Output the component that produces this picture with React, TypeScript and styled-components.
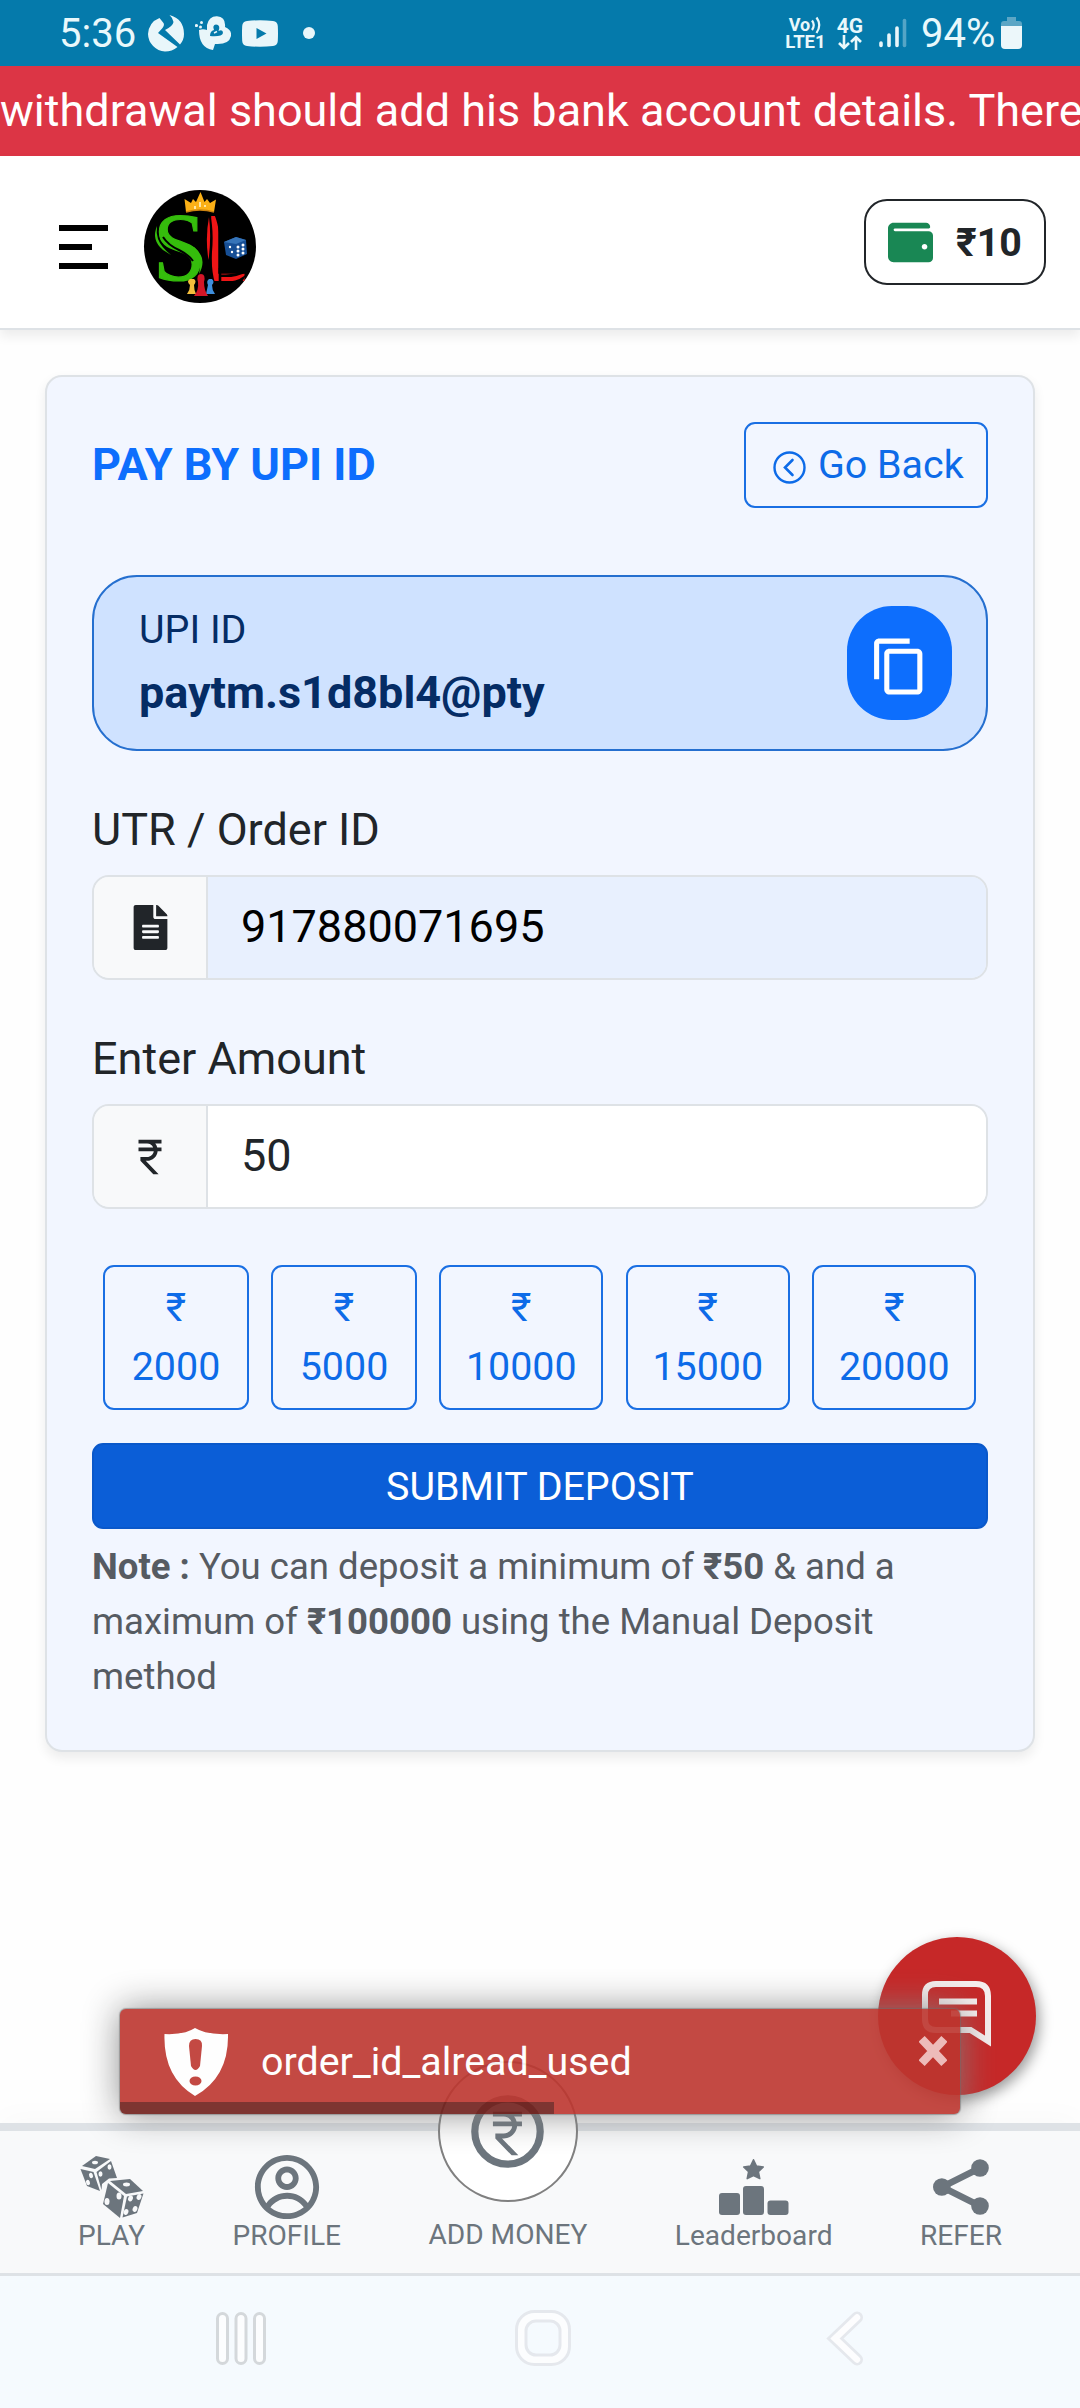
import React from "react";
import styled, { createGlobalStyle } from "styled-components";
import { FaFileAlt, FaWallet } from "react-icons/fa";
import { MdContentCopy, MdCurrencyRupee } from "react-icons/md";
import { CgProfile } from "react-icons/cg";

const GlobalStyle = createGlobalStyle`
  *, *::before, *::after { box-sizing: border-box; }
  body { margin: 0; background: #fff; color: #212529; font-family: Roboto, "Noto Sans", sans-serif; font-size: 45px; line-height: 1.5; }
  button { font-family: inherit; margin: 0; cursor: pointer; }
  svg { display: block; flex: none; }
`;

const Screen = styled.div`
  position: relative;
  display: flex;
  flex-direction: column;
  width: 1080px;
  height: 2408px;
  overflow: hidden;
  background: #fefefe;
`;

/* ---------- status bar ---------- */

const StatusBar = styled.div`
  display: flex;
  align-items: center;
  justify-content: space-between;
  flex: none;
  height: 66px;
  padding: 0 58px 0 59px;
  background: #057aab;
  color: #e9f8fb;
`;

const StatusGroup = styled.div`
  display: flex;
  align-items: center;
  height: 66px;
`;

const StatusText = styled.span<{ $width: number }>`
  width: ${(p) => p.$width}px;
  font-size: 40px;
  line-height: 65px;
  white-space: nowrap;
`;

const Stack = styled.div<{ $gap: number }>`
  display: flex;
  flex-direction: column;
  align-items: center;
  margin-right: ${(p) => p.$gap}px;
`;

const TinyText = styled.span<{ $size: number; $line: number }>`
  display: flex;
  font-size: ${(p) => p.$size}px;
  line-height: ${(p) => p.$line}px;
  font-weight: 700;
  white-space: nowrap;
`;

/* ---------- top of the page ---------- */

const Marquee = styled.div`
  flex: none;
  height: 90px;
  padding-top: 11px;
  overflow: hidden;
  background: #dc3545;
  color: #fff;
  line-height: 67.5px;
  white-space: nowrap;
`;

const Header = styled.header`
  display: flex;
  align-items: center;
  flex: none;
  height: 174px;
  padding: 9px 34px 0 59px;
  background: #fff;
  border-bottom: 2px solid #dee2e6;
  box-shadow: 0 5.6px 11.25px rgba(0, 0, 0, 0.075);
`;

const MenuButton = styled.button`
  display: flex;
  flex-direction: column;
  gap: 13px;
  width: 49px;
  margin-right: 36px;
  padding: 0;
  border: 0;
  background: none;
`;

const MenuLine = styled.span<{ $width: number }>`
  width: ${(p) => p.$width}px;
  height: 6px;
  background: #000;
`;

const WalletButton = styled.button`
  display: flex;
  align-items: center;
  width: 182px;
  height: 86px;
  margin: -9px 0 0 auto;
  padding: 0 0 0 22px;
  border: 2px solid #212529;
  border-radius: 23px;
  background: #fff;
  color: #212529;
  font-size: 39.4px;
  font-weight: 700;
  line-height: 57px;

  svg { margin-right: 23px; color: #198754; }
`;

/* ---------- deposit card ---------- */

const Main = styled.main`
  flex: 1;
  padding: 45px;
`;

const Card = styled.section`
  padding: 45px;
  border: 2px solid #dee2e6;
  border-radius: 17px;
  background: #f2f6ff;
  box-shadow: 0 5.6px 11.25px rgba(0, 0, 0, 0.075);
`;

const CardHead = styled.div`
  display: flex;
  align-items: center;
  justify-content: space-between;
  margin-bottom: 67px;
`;

const CardTitle = styled.h1`
  margin: 0;
  color: #0d6efd;
  font-size: 45px;
  font-weight: 700;
  line-height: 67.5px;
`;

const OutlineButton = styled.button`
  border: 2px solid #1a6fe3;
  border-radius: 11px;
  background: transparent;
  color: #0d6be8;
  font-size: 39.4px;
  line-height: 59px;
`;

const BackButton = styled(OutlineButton)`
  display: flex;
  align-items: center;
  width: 244px;
  height: 86px;
  padding: 0 0 1px 27px;

  svg { margin: 6px 12px 0 0; }
`;

const UpiBox = styled.div`
  display: flex;
  align-items: center;
  justify-content: space-between;
  height: 176px;
  padding: 0 34px 0 45px;
  border: 2px solid #256fcf;
  border-radius: 45px;
  background: #cfe2ff;
  color: #052c65;
`;

const UpiLabel = styled.div`
  font-size: 39.4px;
  line-height: 59px;
`;

const UpiValue = styled.div`
  font-size: 45px;
  font-weight: 700;
  line-height: 67.5px;
`;

const CopyButton = styled.button`
  display: flex;
  align-items: center;
  justify-content: center;
  width: 105px;
  height: 114px;
  padding: 6px 0 0;
  border: 0;
  border-radius: 45px;
  background: #0d6efd;
  color: #fff;
`;

const Label = styled.label`
  display: block;
  margin: 45px 0 11.5px;
  line-height: 67.5px;
`;

const InputGroup = styled.div`
  display: flex;
  height: 105px;
  overflow: hidden;
  border: 2px solid #dee2e6;
  border-radius: 17px;
`;

const Addon = styled.span`
  display: flex;
  align-items: center;
  justify-content: center;
  width: 114px;
  border-right: 2px solid #dee2e6;
  background: #f8f9fa;
`;

const Field = styled.input<{ $filled?: boolean }>`
  flex: 1;
  min-width: 0;
  padding: 0 33px 2px;
  border: 0;
  outline: 0;
  background: ${(p) => (p.$filled ? "#e8f0fe" : "#fff")};
  color: ${(p) => (p.$filled ? "#000" : "#212529")};
  font: 45px Roboto, sans-serif;
`;

const Amounts = styled.div`
  display: flex;
  gap: 22.5px;
  margin: 56px 0 33px;
  padding: 0 11.25px;
`;

const AmountButton = styled(OutlineButton)<{ $width: number }>`
  display: flex;
  flex-direction: column;
  align-items: center;
  justify-content: center;
  width: ${(p) => p.$width}px;
  height: 145px;
  padding: 0 0 1px;
`;

const SubmitButton = styled.button`
  display: block;
  width: 100%;
  height: 86px;
  padding: 1px 0 0;
  border: 2px solid #0a58ca;
  border-radius: 11px;
  background: #0b5ed7;
  color: #fff;
  font-size: 39.4px;
  line-height: 59px;
`;

const Note = styled.p`
  margin: 11px 0 0;
  color: #565b62;
  font-size: 36.56px;
  line-height: 54.84px;

  b { font-weight: 700; }
`;

/* ---------- overlays ---------- */

const ChatButton = styled.button`
  position: absolute;
  left: 878px;
  top: 1937px;
  display: flex;
  width: 158px;
  height: 158px;
  padding: 44px;
  border: 0;
  border-radius: 50%;
  background: #c62828;
  box-shadow: 3px 5px 14px rgba(0, 0, 0, 0.4);
`;

const Toast = styled.div`
  position: absolute;
  left: 120px;
  top: 2009px;
  display: flex;
  width: 840px;
  height: 105px;
  padding: 19px 13px 0 44px;
  border-radius: 6px;
  background: #bd362f;
  box-shadow: 0 0 1px 1px rgba(110, 110, 110, 0.6), 0 0 36px #828282;
  color: #fff;
  font-size: 39.4px;
  line-height: 59px;
  opacity: 0.9;
`;

const ToastText = styled.span`
  flex: 1;
  padding: 4px 0 0 32px;
`;

const ToastClose = styled.button`
  align-self: flex-start;
  margin-top: 8px;
  padding: 0;
  border: 0;
  background: none;
`;

const ToastProgress = styled.div`
  position: absolute;
  left: 0;
  bottom: 0;
  width: 434px;
  height: 12px;
  border-bottom-left-radius: 6px;
  background: #000;
  opacity: 0.4;
`;

/* ---------- bottom bars ---------- */

const BottomNav = styled.nav`
  display: flex;
  justify-content: space-between;
  flex: none;
  height: 153px;
  padding: 0 78px 0 78px;
  border-top: 8px solid #dee2e6;
  border-bottom: 3px solid #dee2e6;
  background: #f8f9fa;
  box-shadow: 0 -5px 30px rgba(0, 0, 0, 0.025);
`;

const NavItem = styled.a<{ $lift?: boolean }>`
  position: relative;
  display: flex;
  flex-direction: column;
  align-items: center;
  justify-content: flex-end;
  padding-bottom: ${(p) => (p.$lift ? 18 : 17)}px;
  color: #6c757d;
  font-size: 28.1px;
  line-height: 41px;
  white-space: nowrap;
`;

const IconSlot = styled.span`
  display: flex;
  align-items: center;
  justify-content: center;
  height: 70px;
  margin-bottom: -7px;
`;

const CoinBadge = styled.span`
  position: absolute;
  left: 50%;
  top: -70px;
  display: flex;
  align-items: center;
  justify-content: center;
  width: 140px;
  height: 141px;
  margin-left: -70px;
  border: 2px solid #808080;
  border-radius: 50%;
  background: #fff;
`;

const SystemNav = styled.div`
  display: grid;
  grid-template-columns: 300px 310px auto;
  align-items: start;
  flex: none;
  height: 132px;
  padding: 33px 0 0 214px;
  background: #f5fafe;
`;

/* ---------- drawings ---------- */

const StatusIcon = styled.svg<{ $gap: number }>`
  margin-right: ${(p) => p.$gap}px;
`;

const CallGlyph = () => (
  <StatusIcon $gap={11} width="36" height="37" viewBox="0 0 36 37">
    <path fill="#e9f6fa" d="M11.500 3L15.500 8Q16.800 10 14.500 13L10 18L29.500 32Q24 36.500 17 36.500A18 18 0 0 1 0 19Q1 7 11.500 3ZM21.500 0Q36 4 36 19Q36 25 32 29.500L17 15Q25 11 25.500 7Q24.500 2.500 21.500 0Z" />
  </StatusIcon>
);

const HeartGlyph = () => (
  <StatusIcon $gap={11} width="36" height="34" viewBox="0 0 36 34">
    <g fill="#e9f6fa">
      <circle cx="1.500" cy="9.500" r="1.600" />
      <circle cx="6.500" cy="6.500" r="1.500" />
      <circle cx="5.500" cy="11" r="1.500" />
      <path d="M12 9Q14 0 22 .3Q31 1 30 11Q37 14 36 20Q34 29 20 28L18 34Q4 32 4 14Q8 12.500 12 14Z" />
    </g>
    <path fill="#057aab" d="M15 20Q15 15 19 14Q17 9 21 8.500Q26 9 23.500 15Q28 13 28 17Q27 21 15 20Z" />
    <path fill="none" stroke="#e9f6fa" strokeWidth="1.500" d="M19 17L22 15.500" />
  </StatusIcon>
);

const VideoGlyph = () => (
  <StatusIcon $gap={25} width="36" height="27" viewBox="0 0 36 27">
    <path fill="#e9f6fa" d="M5 1Q18-.5 31 1Q35.500 1.500 35.800 6Q36.200 13.500 35.800 21Q35.500 25.500 31 26Q18 27.500 5 26Q.5 25.500.2 21Q-.2 13.500.2 6Q.5 1.500 5 1Z" />
    <path fill="#057aab" d="M14.500 8L24.500 13.500L14.500 19Z" />
  </StatusIcon>
);

const Dot = () => (
  <svg width="12" height="12" viewBox="0 0 12 12"><circle cx="6" cy="6" r="6" fill="#e9f6fa" /></svg>
);

const VoWave = () => (
  <svg width="12" height="18" viewBox="0 0 12 18">
    <path d="M2 4.500Q5.500 9 2 14M6.500 1.500Q12 9 6.500 17" fill="none" stroke="currentColor" strokeWidth="2.200" />
  </svg>
);

const DataArrows = () => (
  <svg width="24" height="15" viewBox="0 0 24 15">
    <path d="M6 0V13M1 8L6 13L11 8M18 15V2M13 7L18 2L23 7" fill="none" stroke="currentColor" strokeWidth="2.600" />
  </svg>
);

const Signal = () => (
  <StatusIcon $gap={14} width="28" height="30" viewBox="0 0 28 30">
    <g stroke="#e9f6fa" strokeWidth="3.600" strokeLinecap="round">
      <path d="M2 25V27.500M10 17V27.500M18 10V27.500" />
      <path d="M25.500 2.500V27.500" opacity=".35" />
    </g>
  </StatusIcon>
);

const Battery = () => (
  <svg width="21" height="32" viewBox="0 0 21 32">
    <path d="M6 0H15V4H18Q21 4 21 7V10H0V7Q0 4 3 4H6Z" fill="#5ca6c5" />
    <path d="M0 9H21V28Q21 32 17 32H4Q0 32 0 28Z" fill="#ecf7fa" />
  </svg>
);

const LogoMark = styled.svg`
  overflow: visible;
`;

const Logo = () => (
  <LogoMark width="112" height="113" viewBox="0 0 112 113">
    <ellipse cx="56" cy="56.500" rx="56" ry="56.500" />
    <path d="M42 22L40.500 9L47 13L49 9L52 12L56.500 2L60.500 12L63 9L66 13L72 9.500L70 22Q56 18 42 22Z" fill="#fbb016" />
    <path d="M42 22Q56 18 70 22" stroke="#cc8310" strokeWidth="1.500" fill="none" />
    <path d="M51 16V19M56 12V17M61 15V17" stroke="#fff3c7" strokeWidth="1.600" />
    <text x="9" y="90" fontFamily="Liberation Serif" fontSize="97" fill="#35bd0c" stroke="#35bd0c" strokeWidth="1.200" textLength="53" lengthAdjust="spacingAndGlyphs">S</text>
    <path d="M19 47Q24 55 35 60Q45 65 49 71" fill="none" stroke="#000" strokeWidth="2" />
    <path d="M13 36Q7 50 19 60L27 65Q17 57 14 49Q12 43 13 36Z" fill="#35bd0c" />
    <path d="M50 57Q64 68 55 84Q58 70 50 62Z" fill="#35bd0c" />
    <text x="61" y="91" fontFamily="Liberation Sans" fontSize="94" fill="#ef1516" textLength="42" lengthAdjust="spacingAndGlyphs">L</text>
    <path d="M70 24L77 24V60Q75 34 70 24ZM64 24L66 24Q70 40 68 62Q67 80 71 93L64 93Z" fill="#000" />
    <path d="M76 78V93M76 85.500Q90 87 102 81" fill="none" stroke="#000" strokeWidth="2.600" />
    <path d="M103 83.500Q97 90 86 91.500L98 92Z" fill="#000" />
    <path d="M65 27Q67.500 47 64.500 70Q61 48 65 27Z" fill="#ef1516" />
    <path d="M80 52L92 47L102 50L103 64L92 69L82 65Z" fill="#174f95" />
    <path d="M80 52L92 47L102 50L92 54Z" fill="#3674b8" />
    <g fill="#fff">
      <circle cx="94" cy="57" r="1.500" /><circle cx="99" cy="55" r="1.500" />
      <circle cx="94" cy="61" r="1.500" /><circle cx="99" cy="59" r="1.500" />
      <circle cx="94" cy="65" r="1.500" /><circle cx="99" cy="63" r="1.500" />
      <circle cx="86" cy="57" r="1.200" /><circle cx="88" cy="62" r="1.200" />
    </g>
    <path d="M46 95Q42 91 46 89H50Q53 91 50 95Q50 100 52 104H43Q46 100 46 95Z" fill="#f3bd3c" />
    <path d="M64 95Q62 91 65 89H68Q71 92 68 95Q68 100 71 104H62Z" fill="#3f8fdd" />
    <path d="M54 92Q52 84 57 84Q62 84 60 92Q60 100 64 106H50Q55 100 54 92Z" fill="#d31627" />
  </LogoMark>
);

const BackArrow = () => (
  <svg width="33" height="33" viewBox="0 0 33 33">
    <circle cx="16.500" cy="16.500" r="15" fill="none" stroke="currentColor" strokeWidth="2.400" />
    <path d="M19.500 9L12 16.500L19.500 24" fill="none" stroke="currentColor" strokeWidth="2.600" strokeLinecap="round" />
  </svg>
);

const ChatGlyph = () => (
  <svg width="70" height="70" viewBox="0 0 70 70">
    <path d="M66 60V15Q66 3 54 3H14Q3 3 3 14V38Q3 49 14 49H48.500Z" fill="none" stroke="#f6eeee" strokeWidth="6" />
    <path d="M17 20.500H55M29 32.500H55" stroke="#f6eeee" strokeWidth="6" />
  </svg>
);

const ShieldGlyph = () => (
  <svg width="65" height="68" viewBox="0 0 65 68">
    <path d="M31 0Q43 7 64 6Q65 49 31 68Q-1 49 .5 6Q20 7 31 0Z" fill="#fff" />
    <path d="M31.500 11Q38.500 11 38 18L36 38Q31.500 46 27 38L25 18Q25 11 31.500 11Z" fill="#bd362f" />
    <ellipse cx="31.500" cy="53" rx="6" ry="4.500" fill="#bd362f" />
  </svg>
);

const CrossGlyph = () => (
  <svg width="28" height="30" viewBox="0 0 28 30">
    <path d="M5.500 6L22.500 24M22.500 6L5.500 24" stroke="#f2cbc9" strokeWidth="8.500" strokeLinecap="square" />
  </svg>
);

const DiceGlyph = () => (
  <svg width="64" height="64" viewBox="0 0 64 64">
    <g fill="#6c757d">
      <path d="M2 11L16 1L30 4L15 14Z" />
      <path d="M.5 14L13.500 17L20 36L7 31Z" />
      <path d="M16.500 17L31 6L37 23L29 23.500L22 29L21.500 35Z" />
      <path d="M30 26L50 24L63 36L46 39Z" />
      <path d="M28 28L44 41L40 63L23 49Z" />
      <path d="M47 41.500L63.500 38.500L57 58L42.500 62.500Z" />
    </g>
    <g fill="#f8f9fa">
      <ellipse cx="15" cy="7.500" rx="3" ry="1.800" />
      <ellipse cx="11" cy="20.500" rx="1.900" ry="2.700" transform="rotate(-20 11 20.500)" />
      <ellipse cx="8" cy="27.500" rx="1.900" ry="2.700" transform="rotate(-20 8 27.500)" />
      <ellipse cx="29.500" cy="12" rx="2" ry="2.700" />
      <ellipse cx="20.500" cy="19" rx="2" ry="2.700" />
      <ellipse cx="46.500" cy="29.500" rx="3.500" ry="1.900" />
      <ellipse cx="39" cy="41" rx="2.500" ry="3.500" />
      <ellipse cx="27" cy="46.500" rx="2.500" ry="3.500" />
      <ellipse cx="50.500" cy="43.500" rx="2.300" ry="2.900" transform="rotate(25 50.500 43.500)" />
      <ellipse cx="59" cy="42" rx="2.300" ry="2.900" transform="rotate(25 59 42)" />
      <ellipse cx="46" cy="57" rx="2.300" ry="2.900" transform="rotate(25 46 57)" />
      <ellipse cx="55" cy="54" rx="2.300" ry="2.900" transform="rotate(25 55 54)" />
    </g>
  </svg>
);

const CoinGlyph = () => (
  <svg width="73" height="73" viewBox="0 0 73 73">
    <circle cx="36.500" cy="36.500" r="32.700" fill="none" stroke="#6c757d" strokeWidth="7.200" />
    <path transform="translate(7.4 9.5) scale(2.42)" fill="#6c757d" d="M13.660 7c-.56-1.180-1.760-2-3.160-2H6V3h12v2h-3.260c.48.580.840 1.260 1.050 2H18v2h-2.020c-.25 2.800-2.610 5-5.480 5h-.73l6.730 7h-2.770L7 14v-2h3.500c1.760 0 3.220-1.300 3.460-3H6V7h7.660z" />
  </svg>
);

const PodiumGlyph = () => (
  <svg width="70" height="56" viewBox="0 0 70 56" fill="#6c757d">
    <rect x="0" y="34" width="21" height="22" rx="3" />
    <rect x="24" y="27" width="21" height="29" rx="3" />
    <rect x="48.500" y="41.500" width="21" height="14.500" rx="3" />
    <path stroke="#6c757d" strokeWidth="1.500" strokeLinejoin="round" d="M34.500 .8L37.500 7L44.300 8L39.400 12.600L40.800 19.600L34.500 16.500L28.200 19.600L29.600 12.600L24.700 8L31.500 7Z" />
  </svg>
);

const ShareGlyph = () => (
  <svg width="56" height="56" viewBox="0 0 56 56">
    <path d="M47 9L9 28L47 47" fill="none" stroke="#6c757d" strokeWidth="6.500" />
    <g fill="#6c757d"><circle cx="8.800" cy="28" r="8.800" /><circle cx="47" cy="9" r="8.800" /><circle cx="47" cy="47" r="8.800" /></g>
  </svg>
);

const RecentsGlyph = () => (
  <svg width="54" height="58" viewBox="0 0 54 58" fill="#fcfdfe" stroke="#d4d8db" strokeWidth="3">
    <rect x="3.500" y="4.500" width="10" height="50" rx="5" />
    <rect x="22" y="4.500" width="10" height="50" rx="5" />
    <rect x="40.500" y="4.500" width="10" height="50" rx="5" />
  </svg>
);

const HomeGlyph = () => (
  <svg width="58" height="58" viewBox="0 0 58 58" stroke="#e5e8ed" strokeWidth="3">
    <rect x="2.500" y="2.500" width="53" height="53" rx="18" fill="#fcfdfe" />
    <rect x="12" y="12" width="34" height="34" rx="10" fill="#f5fafe" />
  </svg>
);

const ChevronGlyph = () => (
  <svg width="40" height="58" viewBox="0 0 40 58" fill="none" strokeLinecap="round">
    <path d="M33 8.500L11 29.500L33 50.500" stroke="#e5e8ed" strokeWidth="12" />
    <path d="M33 8.500L11 29.500L33 50.500" stroke="#fdfdfe" strokeWidth="6.500" />
  </svg>
);

const AMOUNTS = [
  { value: 2000, width: 145.5 },
  { value: 5000, width: 145.5 },
  { value: 10000, width: 164 },
  { value: 15000, width: 164 },
  { value: 20000, width: 164 },
];

export default function App() {
  return (
    <Screen>
      <GlobalStyle />
      <StatusBar>
        <StatusGroup>
          <StatusText $width={89}>5:36</StatusText>
          <CallGlyph />
          <HeartGlyph />
          <VideoGlyph />
          <Dot />
        </StatusGroup>
        <StatusGroup>
          <Stack $gap={11}>
            <TinyText $size={18} $line={17}>Vo<VoWave /></TinyText>
            <TinyText $size={18.5} $line={17}>LTE1</TinyText>
          </Stack>
          <Stack $gap={16}>
            <TinyText $size={21} $line={18}>4G</TinyText>
            <DataArrows />
          </Stack>
          <Signal />
          <StatusText $width={80}>94%</StatusText>
          <Battery />
        </StatusGroup>
      </StatusBar>

      <Marquee>withdrawal should add his bank account details. There</Marquee>

      <Header>
        <MenuButton aria-label="Menu">
          <MenuLine $width={49} />
          <MenuLine $width={33} />
          <MenuLine $width={49} />
        </MenuButton>
        <Logo />
        <WalletButton><FaWallet size={45} />₹10</WalletButton>
      </Header>

      <Main>
        <Card>
          <CardHead>
            <CardTitle>PAY BY UPI ID</CardTitle>
            <BackButton><BackArrow />Go Back</BackButton>
          </CardHead>

          <UpiBox>
            <div>
              <UpiLabel>UPI ID</UpiLabel>
              <UpiValue>paytm.s1d8bl4@pty</UpiValue>
            </div>
            <CopyButton aria-label="Copy"><MdContentCopy size={61} /></CopyButton>
          </UpiBox>

          <Label htmlFor="utr">UTR / Order ID</Label>
          <InputGroup>
            <Addon><FaFileAlt size={45} /></Addon>
            <Field id="utr" $filled defaultValue="917880071695" />
          </InputGroup>

          <Label htmlFor="amount">Enter Amount</Label>
          <InputGroup>
            <Addon><MdCurrencyRupee size={46} /></Addon>
            <Field id="amount" defaultValue="50" />
          </InputGroup>

          <Amounts>
            {AMOUNTS.map((a) => (
              <AmountButton key={a.value} $width={a.width}>
                <span>₹</span>
                <span>{a.value}</span>
              </AmountButton>
            ))}
          </Amounts>

          <SubmitButton>SUBMIT DEPOSIT</SubmitButton>
          <Note>
            <b>Note :</b> You can deposit a minimum of <b>₹50</b> &amp; and a<br />
            maximum of <b>₹100000</b> using the Manual Deposit<br />
            method
          </Note>
        </Card>
      </Main>

      <BottomNav>
        <NavItem><IconSlot><DiceGlyph /></IconSlot>PLAY</NavItem>
        <NavItem><IconSlot><CgProfile size={70} /></IconSlot>PROFILE</NavItem>
        <NavItem $lift><CoinBadge><CoinGlyph /></CoinBadge>ADD MONEY</NavItem>
        <NavItem><IconSlot><PodiumGlyph /></IconSlot>Leaderboard</NavItem>
        <NavItem><IconSlot><ShareGlyph /></IconSlot>REFER</NavItem>
      </BottomNav>

      <SystemNav>
        <RecentsGlyph />
        <HomeGlyph />
        <ChevronGlyph />
      </SystemNav>

      <ChatButton aria-label="Chat"><ChatGlyph /></ChatButton>
      <Toast>
        <ShieldGlyph />
        <ToastText>order_id_alread_used</ToastText>
        <ToastClose aria-label="Close"><CrossGlyph /></ToastClose>
        <ToastProgress />
      </Toast>
    </Screen>
  );
}
